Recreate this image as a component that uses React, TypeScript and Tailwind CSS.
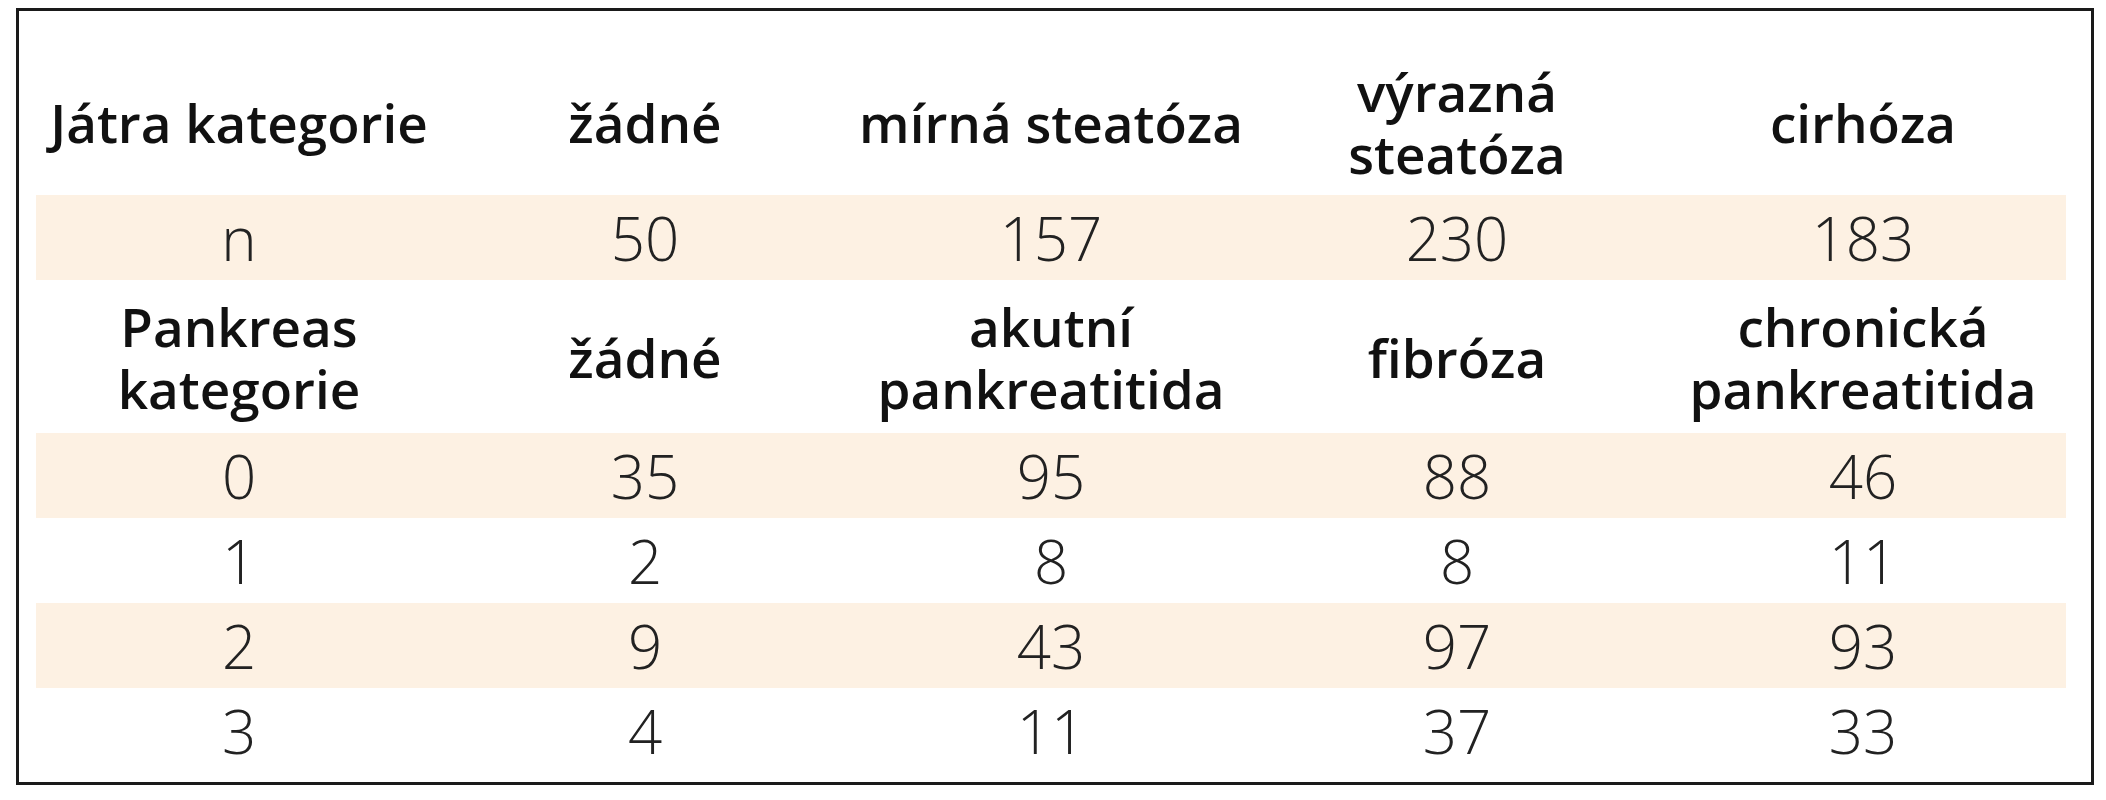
const head = ['Játra kategorie', 'žádné', 'mírná steatóza', 'výrazná\nsteatóza', 'cirhóza']
const nRow = ['n', '50', '157', '230', '183']
const head2 = ['Pankreas\nkategorie', 'žádné', 'akutní\npankreatitida', 'fibróza', 'chronická\npankreatitida']
const rows = [
  ['0', '35', '95', '88', '46'],
  ['1', '2', '8', '8', '11'],
  ['2', '9', '43', '97', '93'],
  ['3', '4', '11', '37', '33'],
]

function HeadRow({ cells, h }: { cells: string[]; h: string }) {
  return (
    <div className={`grid grid-cols-5 items-center ${h}`}>
      {cells.map((c, i) => (
        <div
          key={i}
          className="text-center font-semibold text-[53px] leading-[62px] text-[#111] whitespace-pre-line [font-stretch:88%]"
        >
          {c}
        </div>
      ))}
    </div>
  )
}

function DataRow({ cells, band }: { cells: string[]; band: boolean }) {
  return (
    <div className={`grid grid-cols-5 items-center h-[85px] ${band ? 'bg-[#fdf1e3]' : ''}`}>
      {cells.map((c, i) => (
        <div key={i} className="text-center font-light text-[60px] leading-none text-[#222] [font-stretch:90%]">
          {c}
        </div>
      ))}
    </div>
  )
}

export default function App() {
  return (
    <div className="w-[2106px] h-[800px] bg-white pt-2 pl-4 font-['Open_Sans',sans-serif]">
      <div className="w-[2078px] h-[777px] border-[3px] border-[#1a1a1a] pl-[17px] pt-[39px]">
        <div className="w-[2030px] flex flex-col">
          <HeadRow cells={head} h="h-[145px]" />
          <div className="h-[87px]">
            <DataRow cells={nRow} band />
          </div>
          <HeadRow cells={head2} h="h-[151px]" />
          {rows.map((r, i) => (
            <DataRow key={i} cells={r} band={i % 2 === 0} />
          ))}
        </div>
      </div>
    </div>
  )
}
